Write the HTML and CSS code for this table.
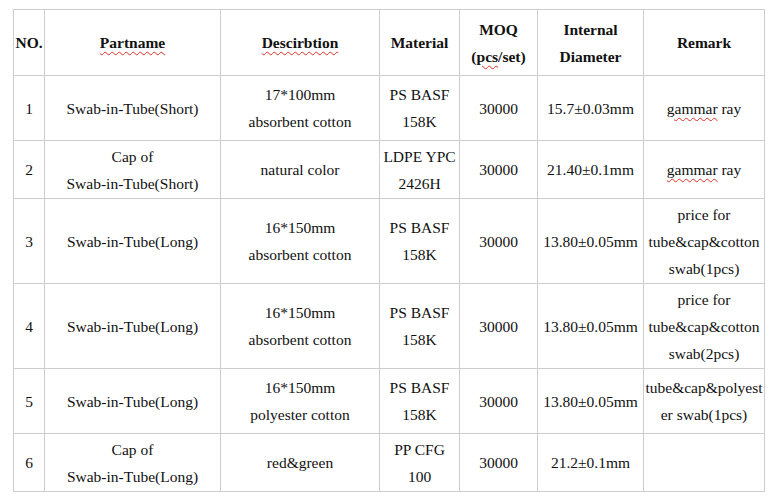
FILE: index.html
```html
<!DOCTYPE html>
<html>
<head>
<meta charset="utf-8">
<link rel="stylesheet" href="styles.css">
</head>
<body>
<table class="spec">
  <colgroup>
    <col class="c-no"><col class="c-part"><col class="c-desc"><col class="c-mat"><col class="c-moq"><col class="c-dia"><col class="c-rem">
  </colgroup>
  <thead>
    <tr class="r-head">
      <th>NO.</th>
      <th><span class="sp">Partname</span></th>
      <th><span class="sp">Descirbtion</span></th>
      <th>Material</th>
      <th>MOQ<br>(<span class="sp">pcs</span>/set)</th>
      <th>Internal<br>Diameter</th>
      <th>Remark</th>
    </tr>
  </thead>
  <tbody>
    <tr class="r1">
      <td>1</td>
      <td>Swab-in-Tube(Short)</td>
      <td>17*100mm<br>absorbent cotton</td>
      <td>PS BASF<br>158K</td>
      <td>30000</td>
      <td>15.7±0.03mm</td>
      <td><span class="sp">gammar</span> ray</td>
    </tr>
    <tr class="r2">
      <td>2</td>
      <td>Cap of<br>Swab-in-Tube(Short)</td>
      <td>natural color</td>
      <td>LDPE YPC<br>2426H</td>
      <td>30000</td>
      <td>21.40±0.1mm</td>
      <td><span class="sp">gammar</span> ray</td>
    </tr>
    <tr class="r3">
      <td>3</td>
      <td>Swab-in-Tube(Long)</td>
      <td>16*150mm<br>absorbent cotton</td>
      <td>PS BASF<br>158K</td>
      <td>30000</td>
      <td>13.80±0.05mm</td>
      <td>price for<br>tube&amp;cap&amp;cotton<br>swab(1pcs)</td>
    </tr>
    <tr class="r4">
      <td>4</td>
      <td>Swab-in-Tube(Long)</td>
      <td>16*150mm<br>absorbent cotton</td>
      <td>PS BASF<br>158K</td>
      <td>30000</td>
      <td>13.80±0.05mm</td>
      <td>price for<br>tube&amp;cap&amp;cotton<br>swab(2pcs)</td>
    </tr>
    <tr class="r5">
      <td>5</td>
      <td>Swab-in-Tube(Long)</td>
      <td>16*150mm<br>polyester cotton</td>
      <td>PS BASF<br>158K</td>
      <td>30000</td>
      <td>13.80±0.05mm</td>
      <td>tube&amp;cap&amp;polyest<br>er swab(1pcs)</td>
    </tr>
    <tr class="r6">
      <td>6</td>
      <td>Cap of<br>Swab-in-Tube(Long)</td>
      <td>red&amp;green</td>
      <td>PP CFG<br>100</td>
      <td>30000</td>
      <td>21.2±0.1mm</td>
      <td></td>
    </tr>
  </tbody>
</table>
</body>
</html>
```

FILE: styles.css
```css
html, body {
  margin: 0;
  background: #ffffff;
}
body {
  padding: 9px 0 0 13px;
  font-family: "Liberation Serif", "Times New Roman", Times, "Nimbus Roman", "Tinos", "DejaVu Serif", serif;
  font-size: 15.5px;
  color: #111;
}
.spec {
  border-collapse: collapse;
  table-layout: fixed;
  width: 752px;
  font-family: inherit;
}
.spec th,
.spec td {
  border: 1px solid #cdcdcd;
  padding: 0 1px;
  text-align: center;
  vertical-align: middle;
  line-height: 27px;
  white-space: nowrap;
  font-family: inherit;
}
.spec th {
  font-weight: bold;
}
.c-no { width: 31px; }
.c-part { width: 176px; }
.c-desc { width: 159px; }
.c-mat { width: 80px; }
.c-moq { width: 78px; }
.c-dia { width: 106px; }
.c-rem { width: 121px; }
.r-head { height: 66px; }
.r1 { height: 65px; }
.r2 { height: 58px; }
.r3 { height: 85px; }
.r4 { height: 85px; }
.r5 { height: 65px; }
.r6 { height: 58px; }
.sp {
  text-decoration: underline wavy #e0302a;
  text-decoration-thickness: 1px;
  text-underline-offset: 3px;
}
```
